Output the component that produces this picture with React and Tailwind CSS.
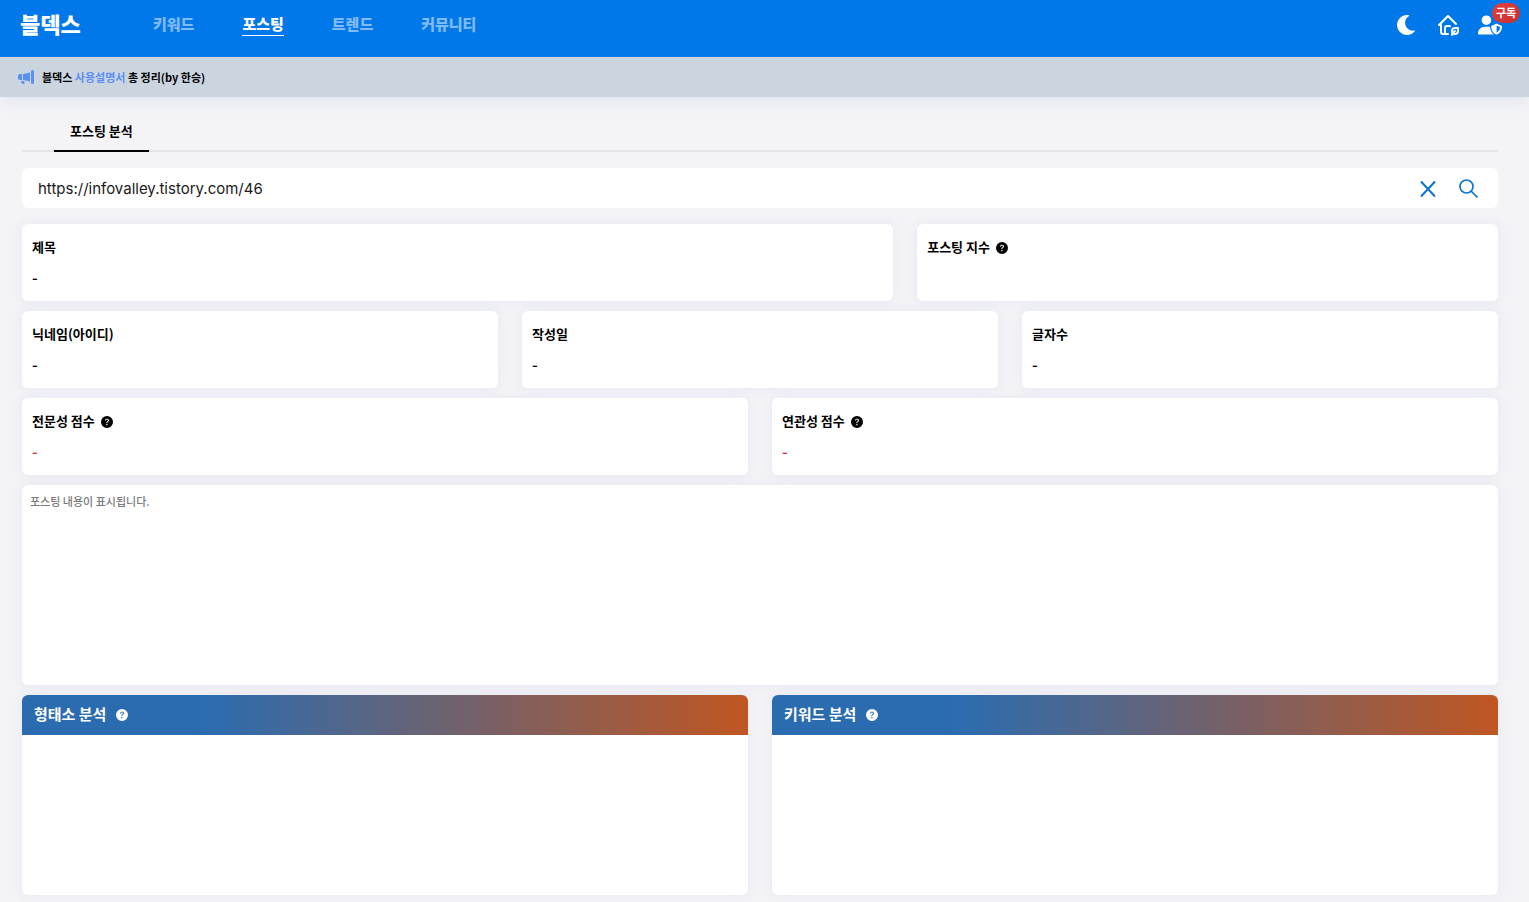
import { useState } from "react";
import { FaMoon } from "react-icons/fa";
import { FaUserShield } from "react-icons/fa6";
import { BsMegaphoneFill, BsQuestionCircleFill } from "react-icons/bs";
import { TbHomeEco } from "react-icons/tb";

const NAV = ["키워드", "포스팅", "트렌드", "커뮤니티"];

function Help({ label }) {
  return (
    <button type="button" aria-label={`${label} 도움말`} className="block pt-0.5">
      <BsQuestionCircleFill size={12} />
    </button>
  );
}

function Card({ title, value, help, red }) {
  return (
    <section className="h-[77px] rounded-md bg-white px-2.5 pt-[13px] text-[13px] font-bold shadow-[0_0_12px_rgba(200,208,231,0.35)]">
      <h2 className="flex h-5 items-center gap-1.5">
        {title}
        {help && <Help label={title} />}
      </h2>
      {value && (
        <p className={red ? "mt-2.5 text-base leading-5 font-medium text-[#e02f3f]" : "mt-2.5 text-base leading-5 font-medium"}>
          {value}
        </p>
      )}
    </section>
  );
}

function Panel({ title }) {
  return (
    <section className="h-[200px] overflow-hidden rounded-md bg-white shadow-[0_0_12px_rgba(200,208,231,0.35)]">
      <h2 className="flex h-10 items-center gap-2.5 bg-linear-to-r/srgb from-[#2b6cb0] from-25% to-[#c05621] px-3 pb-0.5 text-[15px] leading-5 font-bold text-white">
        {title}
        <Help label={title} />
      </h2>
    </section>
  );
}

export default function App() {
  const [url, setUrl] = useState("https://infovalley.tistory.com/46");
  return (
    <div className="min-h-screen bg-[#f4f4f7] font-['Noto_Sans_CJK_KR',sans-serif] text-black">
      <header className="flex h-[57px] items-center bg-[#0078e9] pr-[27px] pb-2 pl-5 text-white">
        <a href="#home" className="w-[133px] pb-1 text-[22px] leading-8 font-black">
          블덱스
        </a>
        <nav className="flex gap-12 text-[15px] leading-5 font-black">
          {NAV.map((item) => (
            <a
              key={item}
              href={`#${item}`}
              className={item === "포스팅" ? "border-b border-white pb-px" : "border-b border-transparent pb-px text-[#80bbf4]"}
            >
              {item}
            </a>
          ))}
        </nav>
        <div className="ml-auto flex items-center gap-[18px]">
          <button type="button" aria-label="다크 모드">
            <FaMoon size={24} className="p-0.5" />
          </button>
          <button type="button" aria-label="홈">
            <TbHomeEco size={24} />
          </button>
          <button type="button" aria-label="구독 계정" className="relative">
            <FaUserShield size={24} />
            <span className="absolute -top-2.5 -right-4.5 flex h-5 w-7 items-center justify-center rounded-full bg-linear-to-br from-[#e53e3e] to-[#c53030] text-[11px] font-bold">
              구독
            </span>
          </button>
        </div>
      </header>

      <div className="flex h-10 items-center gap-2 bg-[#cbd5e0] px-4.5 text-[11px] leading-4 font-bold shadow-[0_8px_12px_rgba(200,208,231,0.25)]">
        <BsMegaphoneFill size={16} className="text-[#5b8ff5]" />
        <p>
          블덱스 <a href="#guide" className="text-[#5b8ff5]">사용설명서</a> 총 정리(by 한승)
        </p>
      </div>

      <main className="pt-3.5 pr-[31px] pb-[7px] pl-[22px]">
        <div role="tablist" className="flex h-[41px] border-b-2 border-[#e2e4e9] pl-8">
          <button
            type="button"
            role="tab"
            aria-selected="true"
            className="-mb-0.5 border-b-2 border-black px-4 text-[13px] font-bold"
          >
            포스팅 분석
          </button>
        </div>

        <form className="mt-4 flex h-10 items-center gap-5 rounded-md bg-white pt-0.5 pr-5 pl-4" onSubmit={(e) => e.preventDefault()}>
          <input
            type="text"
            aria-label="포스팅 주소"
            value={url}
            onChange={(e) => setUrl(e.target.value)}
            className="min-w-0 flex-1 font-['Inter','Noto_Sans_CJK_KR',sans-serif] text-[15px] text-[#1a1a1a] outline-none"
          />
          <button type="button" aria-label="지우기" onClick={() => setUrl("")} className="text-[#0f73d0]">
            <svg width="20" height="20" viewBox="0 0 20 20" fill="none" stroke="currentColor" strokeWidth="2">
              <path d="M3 2.5 17 17.5M17 2.5 3 17.5" />
            </svg>
          </button>
          <button type="submit" aria-label="검색" className="text-[#0f73d0]">
            <svg width="20" height="20" viewBox="0 0 20 20" fill="none" stroke="currentColor" strokeWidth="1.7">
              <circle cx="8.5" cy="7.5" r="6.5" />
              <path d="m13 12 6.5 6.5" />
            </svg>
          </button>
        </form>

        <div className="mt-4 grid grid-cols-[3fr_2fr] gap-6">
          <Card title="제목" value="-" />
          <Card title="포스팅 지수" help />
        </div>
        <div className="mt-2.5 grid grid-cols-3 gap-6">
          <Card title="닉네임(아이디)" value="-" />
          <Card title="작성일" value="-" />
          <Card title="글자수" value="-" />
        </div>
        <div className="mt-2.5 grid grid-cols-2 gap-6">
          <Card title="전문성 점수" value="-" help red />
          <Card title="연관성 점수" value="-" help red />
        </div>
        <section className="mt-2.5 h-[200px] rounded-md bg-white px-2 pt-2 text-[11px] leading-4 font-medium text-[#7a7a7a] shadow-[0_0_12px_rgba(200,208,231,0.35)]">
          포스팅 내용이 표시됩니다.
        </section>
        <div className="mt-2.5 grid grid-cols-2 gap-6">
          <Panel title="형태소 분석" />
          <Panel title="키워드 분석" />
        </div>
      </main>
    </div>
  );
}
